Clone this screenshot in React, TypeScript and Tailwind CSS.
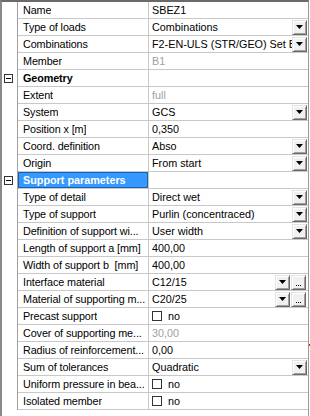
import React from "react";

type Row = {
  label: string;
  value?: string;
  kind: "text" | "gray" | "drop" | "dots" | "check" | "group";
  selected?: boolean;
};

const rows: Row[] = [
  { label: "Name", value: "SBEZ1", kind: "text" },
  { label: "Type of loads", value: "Combinations", kind: "drop" },
  { label: "Combinations", value: "F2-EN-ULS (STR/GEO) Set B", kind: "drop" },
  { label: "Member", value: "B1", kind: "gray" },
  { label: "Geometry", kind: "group" },
  { label: "Extent", value: "full", kind: "gray" },
  { label: "System", value: "GCS", kind: "drop" },
  { label: "Position x [m]", value: "0,350", kind: "text" },
  { label: "Coord. definition", value: "Abso", kind: "drop" },
  { label: "Origin", value: "From start", kind: "drop" },
  { label: "Support parameters", kind: "group", selected: true },
  { label: "Type of detail", value: "Direct wet", kind: "drop" },
  { label: "Type of support", value: "Purlin (concentraced)", kind: "drop" },
  { label: "Definition of support wi...", value: "User width", kind: "drop" },
  { label: "Length of support a [mm]", value: "400,00", kind: "text" },
  { label: "Width of support b  [mm]", value: "400,00", kind: "text" },
  { label: "Interface material", value: "C12/15", kind: "dots" },
  { label: "Material of supporting m...", value: "C20/25", kind: "dots" },
  { label: "Precast support", value: "no", kind: "check" },
  { label: "Cover of supporting me...", value: "30,00", kind: "gray" },
  { label: "Radius of reinforcement...", value: "0,00", kind: "text" },
  { label: "Sum of tolerances", value: "Quadratic", kind: "drop" },
  { label: "Uniform pressure in bea...", value: "no", kind: "check" },
  { label: "Isolated member", value: "no", kind: "check" },
];

function DropButton() {
  return (
    <div className="flex h-[15px] w-[15px] shrink-0 items-center justify-center border border-t-[#e3e3e3] border-l-[#e3e3e3] border-r-[#696969] border-b-[#696969] bg-[#f0f0f0] shadow-[inset_1px_1px_#fff,inset_-1px_-1px_#a0a0a0]">
      <svg width="7" height="4" viewBox="0 0 7 4">
        <path d="M0 0h7L3.5 4z" fill="#000" />
      </svg>
    </div>
  );
}

function DotsButton() {
  return (
    <div className="flex h-[15px] w-[15px] shrink-0 items-end justify-center border border-t-[#e3e3e3] border-l-[#e3e3e3] border-r-[#696969] border-b-[#696969] bg-[#f0f0f0] pb-[3px] shadow-[inset_1px_1px_#fff,inset_-1px_-1px_#a0a0a0]">
      <div className="flex gap-[1px]">
        <span className="h-[1px] w-[1px] bg-black" />
        <span className="h-[1px] w-[1px] bg-black" />
        <span className="h-[1px] w-[1px] bg-black" />
      </div>
    </div>
  );
}

function MinusBox() {
  return (
    <div className="flex h-[9px] w-[9px] items-center justify-center border border-[#333]">
      <span className="h-[1px] w-[5px] bg-black" />
    </div>
  );
}

function Value({ row }: { row: Row }) {
  if (row.kind === "group") return null;
  if (row.kind === "check") {
    return (
      <div className="flex items-center pl-[3px]">
        <span className="h-[10px] w-[10px] border border-[#333] bg-white" />
        <span className="pl-[6px]">{row.value}</span>
      </div>
    );
  }
  return (
    <div className="flex min-w-0 flex-1 items-center">
      <span
        className={`min-w-0 flex-1 overflow-hidden whitespace-nowrap pl-[3px] ${
          row.kind === "gray" ? "text-[#a0a0a0]" : "text-black"
        }`}
      >
        {row.value}
      </span>
      {row.kind === "drop" && (
        <div className="mr-[1px]">
          <DropButton />
        </div>
      )}
      {row.kind === "dots" && (
        <div className="mr-[2px] flex gap-[1px]">
          <DropButton />
          <DotsButton />
        </div>
      )}
    </div>
  );
}

export default function App() {
  return (
    <div
      className="relative h-[416px] w-[310px] overflow-hidden bg-white text-[10.8px] text-black"
      style={{ fontFamily: '"Liberation Sans", Arial, sans-serif' }}
    >
      <div className="mr-[1px] flex h-full flex-col border-t-2 border-l-2 border-r border-t-[#6a6a6a] border-l-[#8a8a8a] border-r-[#9a9a9a]">
        {rows.map((row, i) => (
          <div key={i} className="flex h-[17px] shrink-0">
            <div className="flex w-[16px] shrink-0 items-center justify-center border-r border-[#a0a0a0] pr-[3px]">
              {row.kind === "group" && <MinusBox />}
            </div>
            <div className="flex min-w-0 flex-1 border-b border-[#c8c8c8]">
              <div className="flex w-[131px] shrink-0 items-center border-r border-[#c8c8c8]">
                {row.selected ? (
                  <div className="flex h-full w-full items-center border border-[#1e5fa8] bg-[#3399ff] pl-[4px] font-bold text-white">
                    {row.label}
                  </div>
                ) : (
                  <span
                    className={`overflow-hidden whitespace-pre pl-[5px] tracking-[-0.1px] ${
                      row.kind === "group" ? "font-bold" : ""
                    }`}
                  >
                    {row.label}
                  </span>
                )}
              </div>
              <Value row={row} />
            </div>
          </div>
        ))}
      </div>
      <span className="absolute right-0 top-[344px] h-[2px] w-[1px] bg-[#e02020]" />
    </div>
  );
}
